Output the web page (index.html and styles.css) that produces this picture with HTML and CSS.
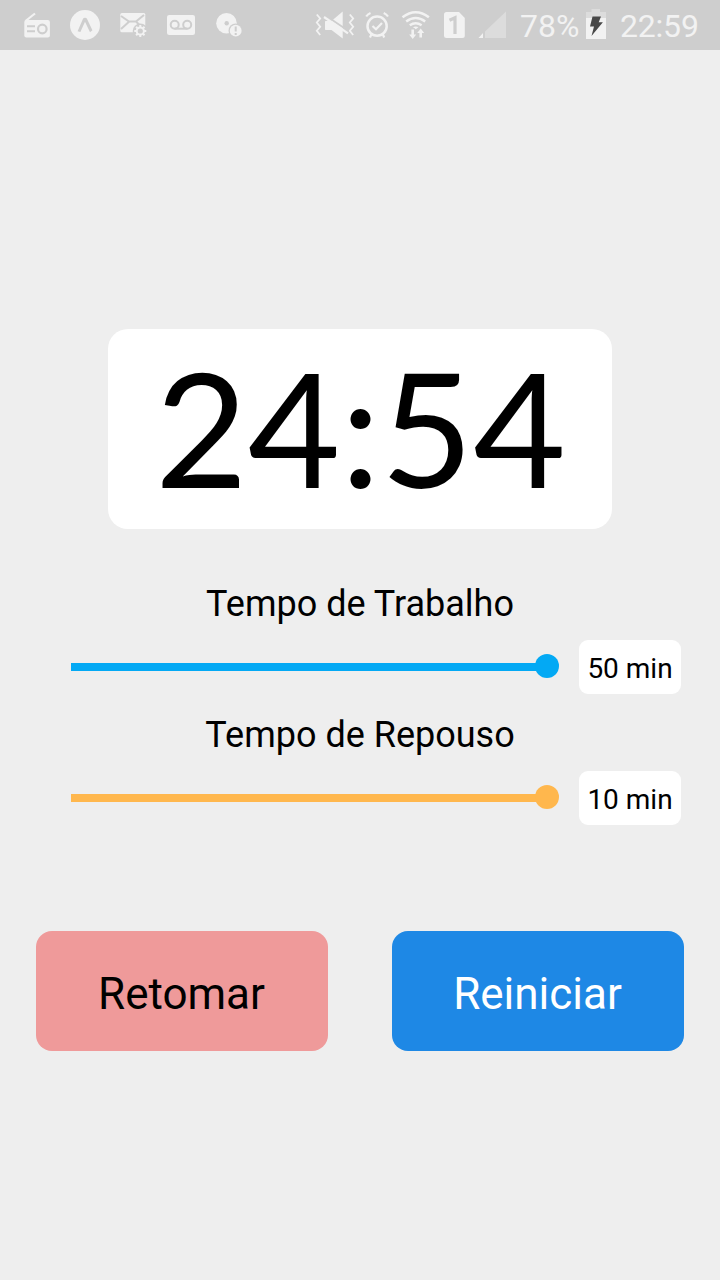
FILE: index.html
```html
<!DOCTYPE html>
<html lang="pt-BR">
<head>
<meta charset="utf-8">
<title>Pomodoro</title>
<link rel="stylesheet" href="styles.css">
</head>
<body>
<header class="status">
  <div class="status-group">
    <svg class="slot" viewBox="13 0 48 50"><path class="line" stroke-width="2.2" d="M25.500 21 35 13.500"/><rect x="24.300" y="20" width="25.600" height="17.500" rx="2"/><path class="cut" stroke-width="2" d="M27 26.200h8M27 31.200h8"/><circle class="cut" cx="42.300" cy="29" r="4.300" stroke-width="2.200"/></svg>
    <svg class="slot" viewBox="61 0 48 50"><circle cx="85" cy="25" r="15"/><path class="cut-fill" d="M77.600 31.200 82.800 19.200Q83.400 17.800 85 17.800T87.200 19.200L92.400 30.200 90 32.200 85 21.800 80.400 32Z"/></svg>
    <svg class="slot" viewBox="109 0 48 50"><rect x="120.300" y="13" width="25" height="19.300" rx="1.500"/><path class="cut" stroke-width="2" d="m121 16 8 5.600h7l8-6.600M121 29l8-7.200M136 21.500l4 4"/><circle class="cut-fill" cx="140.300" cy="31" r="7.600"/><circle class="line" cx="140.300" cy="31" r="3.600" stroke-width="2"/><path class="line" stroke-width="2" d="M140.300 25v2.500M140.300 34.500v2.500M134.300 31h2.500M143.800 31h2.500M136.100 26.800l1.700 1.700M142.800 33.500l1.700 1.700M144.500 26.800l-1.700 1.700M137.800 33.500l-1.700 1.700"/></svg>
    <svg class="slot" viewBox="157 0 48 50"><rect x="167" y="15" width="28" height="20" rx="2.200"/><circle class="cut" cx="174.700" cy="24.700" r="4" stroke-width="2"/><circle class="cut" cx="187.200" cy="24.700" r="4" stroke-width="2"/><path class="cut" stroke-width="2" d="M174.700 28.700h12.500"/></svg>
    <svg class="slot" viewBox="205 0 48 50"><circle cx="226.500" cy="23.200" r="10.300"/><circle class="cut-fill" cx="226.700" cy="23.200" r="2.200"/><circle class="cut-fill" cx="235.700" cy="30.700" r="7.200"/><circle cx="235.700" cy="30.700" r="5.900"/><path class="cut" stroke-width="2" d="M235.700 26.500v5M235.700 33v2"/></svg>
  </div>
  <div class="status-group">
    <svg class="vibrate" viewBox="312 0 46 50"><path class="line" stroke-width="1.800" d="m316.800 14.500 3.400 4-3.400 4 3.400 4.200-3.400 4.100 3.400 4.200M349.800 14.500l3.400 4-3.400 4 3.400 4.200-3.400 4.100 3.400 4.200"/><path d="M325.500 21h6l11.200-9.500v27L331.500 30h-6Q325 30 325 29v-7.500Z"/><path class="cut" stroke-width="2" d="m325.500 15.500 23 15.500"/><path class="line" stroke-width="2.200" d="m324 17 24 16.300"/></svg>
    <svg class="alarm" viewBox="358 0 37 50"><circle class="line" cx="377.100" cy="26.200" r="9.600" stroke-width="2.500"/><path class="line" stroke-width="2.200" d="m372.500 26 3.500 3.300 6-6.300M366.200 16.500q1.500-2.300 4.300-3.500M388 16.500q-1.500-2.300-4.300-3.500M371.500 34l-1.500 3.500M382.700 34l1.500 3.500"/></svg>
    <svg class="wifi" viewBox="395 0 41 50"><path class="line" stroke-width="2.500" d="M402.500 17.300q13.200-10 26.400 0M406.200 21.500q9.500-7 19 0M409.800 25.300q5.900-4 11.800 0"/><path d="M413 27.200q2.700-1.400 5.400 0l-2.700 2Z"/><path class="arrow" d="M411.400 29.500h2.600v5h2.200l-3.500 4.500-3.500-4.500h2.200ZM419.400 37.500h2.600V33h2.200l-3.500-4.500-3.500 4.500h2.200Z"/></svg>
    <svg class="sim" viewBox="436 0 38 50"><path d="M446.500 12h12.500l5.800 6v17.500q0 2.500-2.500 2.500h-15.800q-2.500 0-2.500-2.500v-21q0-2.500 2.500-2.500Z"/><path class="cut" stroke-width="3.200" d="M449.500 20.300 455 17.800V34"/></svg>
    <svg class="signal" viewBox="474 0 46 50"><path class="dim" d="M506 11.500V38h-21V31.500Z"/><path d="M483 33v5h-4.500Z"/></svg>
    <span class="status-text">78%</span>
    <svg class="battery" viewBox="580 0 32 50"><path class="dim" d="M586 12h5.500V9h8.500v3h6v6h-20Z"/><path d="M586 18h20v21h-20Z"/><path class="bolt" d="M592.500 16.500h8.500l-2.300 5.800h4.200l-11.400 13.700 2.500-9.500h-4Z"/></svg>
    <span class="status-text time">22:59</span>
  </div>
</header>
<main class="app">
  <div class="clock">24:54</div>
  <section class="setting work">
    <h2 class="label">Tempo de Trabalho</h2>
    <div class="row"><div class="slider"><div class="track"></div><div class="thumb"></div></div><div class="value">50 min</div></div>
  </section>
  <section class="setting rest">
    <h2 class="label">Tempo de Repouso</h2>
    <div class="row"><div class="slider"><div class="track"></div><div class="thumb"></div></div><div class="value">10 min</div></div>
  </section>
  <div class="actions">
    <button class="button resume">Retomar</button>
    <button class="button restart">Reiniciar</button>
  </div>
</main>
</body>
</html>
```
FILE: styles.css
```css
* { box-sizing: border-box; }
body { margin: 0; min-height: 1280px; background: #eeeeee; color: #000; font-family: Roboto, sans-serif; }
.status { display: flex; justify-content: space-between; height: 50px; padding: 0 21px 0 13px; background: #cecece; color: #f2f2f2; }
.status-group { display: flex; }
.status svg { height: 50px; flex: none; fill: #f2f2f2; }
.status .slot { width: 48px; }
.status .vibrate { width: 46px; }
.status .alarm { width: 37px; }
.status .wifi { width: 41px; }
.status .sim { width: 38px; }
.status .signal { width: 46px; }
.status .battery { width: 32px; }
.status .line { fill: none; stroke: #f2f2f2; }
.status .cut { fill: none; stroke: #cecece; }
.status .cut-fill { fill: #cecece; }
.status .arrow { stroke: #cecece; stroke-width: 2px; paint-order: stroke; }
.status .dim { fill: #dcdcdc; }
.status .bolt { fill: #484848; }
.status-text { width: 60px; padding-top: 1px; font-size: 32px; line-height: 50px; white-space: nowrap; }
.time { width: 87px; padding-left: 8px; letter-spacing: -0.2px; }
.app { display: flex; flex-direction: column; align-items: center; padding-top: 279px; }
.clock { width: 504px; height: 200px; margin-bottom: 51px; padding-left: 1px; border-radius: 20px; background: #fff; font: 160px/194px Lato, sans-serif; text-align: center; }
.setting { width: 720px; height: 131px; }
.label { margin: 0 0 12px; font-size: 36px; font-weight: 400; line-height: 48px; text-align: center; }
.row { display: flex; gap: 20px; align-items: center; padding: 0 39px 0 71px; }
.slider { display: flex; flex: 1; align-items: center; height: 54px; }
.track { flex: 1; height: 8px; margin-right: -12px; background: #03a9f4; }
.thumb { width: 24px; height: 24px; margin-bottom: 2px; border-radius: 50%; background: #03a9f4; }
.rest .track, .rest .thumb { background: #ffb74d; }
.value { width: 102px; height: 54px; padding-top: 2px; border-radius: 9px; background: #fff; font-size: 28px; line-height: 54px; text-align: center; }
.actions { display: flex; gap: 64px; margin-top: 89px; }
.button { width: 292px; height: 120px; padding: 6px 1px 0 0; border: 0; border-radius: 16px; font: 44px Roboto, sans-serif; }
.resume { background: #ef9a9a; color: #000; }
.restart { background: #1e88e5; color: #fff; }
```
